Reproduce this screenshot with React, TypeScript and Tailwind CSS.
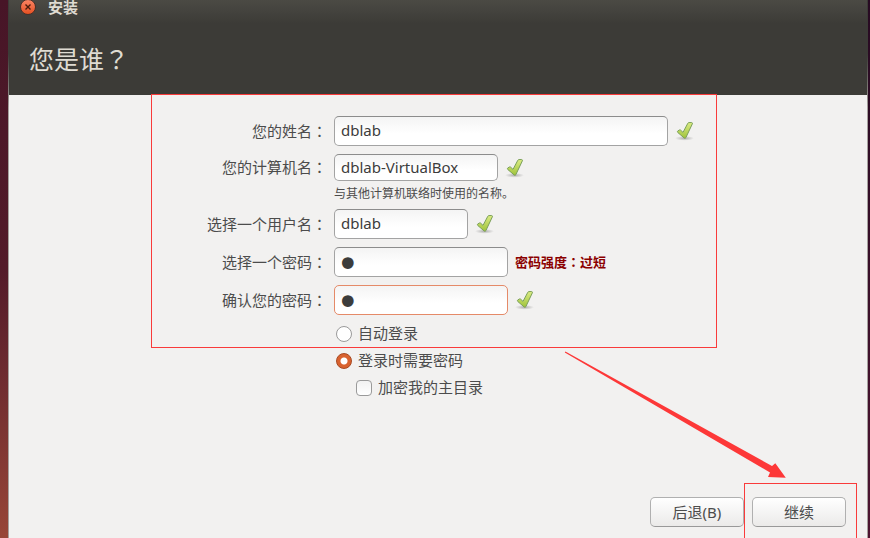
import React from 'react';

const CheckMark = () => (
  <svg className="w-5 h-5 shrink-0" viewBox="0 0 20 20" aria-hidden="true">
    <defs>
      <linearGradient id="tick" x1="0" y1="0" x2="0" y2="1">
        <stop offset="0" stopColor="#dcec84" />
        <stop offset="1" stopColor="#9fc33a" />
      </linearGradient>
      <radialGradient id="tickShadow">
        <stop offset="0" stopColor="#000" stopOpacity="0.28" />
        <stop offset="1" stopColor="#000" stopOpacity="0" />
      </radialGradient>
    </defs>
    <ellipse cx="9.5" cy="17.3" rx="9.5" ry="2.4" fill="url(#tickShadow)" />
    <path
      d="M2.4 10.9 Q2.3 10.2 3 9.8 L4.6 8.9 Q5.2 8.7 5.7 9.2 L8 11.4 L12.8 2.3 Q13.1 1.7 13.8 1.6 L16.6 1.5 Q17.8 1.7 17.3 2.9 L10.9 16.6 Q10.2 17.8 9.2 17 L2.9 11.6 Z"
      fill="url(#tick)"
      stroke="#7ba05a"
      strokeLinejoin="round"
    />
  </svg>
);

// Full-width punctuation centred in its cell
const Mark = ({ children }: { children: string }) => (
  <span className="font-['Noto_Sans_CJK_TC',sans-serif]">{children}</span>
);

type FieldProps = {
  id: string;
  label: string;
  value: string;
  width: string;
  type?: string;
  height?: string;
  focused?: boolean;
  hint?: string;
  children?: React.ReactNode;
};

const Field = ({ id, label, value, width, type = 'text', height = 'h-[30px]', focused, hint, children }: FieldProps) => (
  <div className="grid grid-cols-[318px_1fr] gap-x-[7px]">
    <label htmlFor={id} className="self-center text-right">
      {label}
      <Mark>：</Mark>
    </label>
    <div className="flex items-center gap-[7px]">
      <input
        id={id}
        type={type}
        defaultValue={value}
        className={`${width} ${height} min-w-0 rounded-[5px] border outline-none bg-linear-to-b from-[#f4f4f4] to-white to-60% text-[#3c3c3c] ${
          focused ? 'border-[#e58a68]' : 'border-[#a3a3a3] border-t-[#8c8c8c]'
        } ${
          type === 'password' ? "px-px pt-1 font-['DejaVu_Sans',sans-serif] text-[40px] leading-none" : 'px-[6px] pb-[2px]'
        }`}
      />
      {children}
    </div>
    {hint && <p className="col-start-2 text-xs leading-5 h-5 pt-[3px]">{hint}</p>}
  </div>
);

const radioClass =
  'appearance-none w-4 h-4 rounded-full border border-[#9a9a9a] bg-white checked:border-[#a8471f] checked:bg-[radial-gradient(circle,#fff_0_3px,#d9622f_4px)]';

const buttonClass =
  'w-[94px] h-[30px] rounded-[5px] border border-[#b0b0b0] border-b-[#999] bg-linear-to-b from-white to-[#ebeae9] text-[#4c4c4c]';

const edgeClass = 'w-px bg-linear-to-b from-[#3c3b37] from-10% to-[#a5a19d] to-20%';

const App = () => (
  <div className="min-h-screen flex overflow-hidden text-[15px] text-[#4c4c4c] font-['Noto_Sans','Noto_Sans_CJK_SC',sans-serif]">
    <div className="w-2 bg-linear-to-b from-[#471527] via-[#531b29] to-[#984637]" />
    <div className={edgeClass} />
    <div className="flex-1 flex flex-col bg-[#f2f1f0]">
      <header className="h-[95px] bg-linear-to-b from-[#4b4a44] to-[#3c3b37] to-25% text-[#dfdbd2]">
        <div className="flex items-center gap-3 h-[14px] pl-[11px]">
          <button
            aria-label="关闭"
            className="w-4 h-4 rounded-full border border-[#4a3028] bg-linear-to-b from-[#f98362] to-[#e5501f]"
          >
            <svg viewBox="0 0 14 14" className="block w-full" aria-hidden="true">
              <path d="M4.5 4.5 L9.5 9.5 M9.5 4.5 L4.5 9.5" stroke="#4a1c0c" strokeWidth="1.4" />
            </svg>
          </button>
          <span className="font-bold leading-none">安装</span>
        </div>
        <h1 className="pt-[26px] pl-5 text-[25px] leading-9">
          您是谁<Mark>？</Mark>
        </h1>
      </header>

      <main className="relative flex-1">
        <form className="pt-[21px] flex flex-col gap-2">
          <Field id="name" label="您的姓名" value="dblab" width="w-[334px]">
            <CheckMark />
          </Field>
          <Field
            id="host"
            label="您的计算机名"
            value="dblab-VirtualBox"
            width="w-[164px]"
            height="h-[27px]"
            hint="与其他计算机联络时使用的名称。"
          >
            <CheckMark />
          </Field>
          <Field id="user" label="选择一个用户名" value="dblab" width="w-[134px]">
            <CheckMark />
          </Field>
          <Field id="password" label="选择一个密码" value="a" width="w-[174px]" type="password">
            <strong className="text-[13px] text-[#8b0000]">
              密码强度
              <Mark>：</Mark>
              过短
            </strong>
          </Field>
          <Field id="confirm" label="确认您的密码" value="a" width="w-[174px]" type="password" focused>
            <CheckMark />
          </Field>
          <div className="pl-[327px] -mt-[3px]">
            <label className="flex items-center gap-[6px] h-[27px]">
              <input type="radio" name="login" className={radioClass} />
              自动登录
            </label>
            <label className="flex items-center gap-[6px] h-[27px]">
              <input type="radio" name="login" defaultChecked className={radioClass} />
              登录时需要密码
            </label>
            <label className="flex items-center gap-[6px] h-[27px] pl-5">
              <input
                type="checkbox"
                className="appearance-none w-4 h-4 rounded-[4px] border border-[#9a9a9a] bg-linear-to-b from-[#f2f2f2] to-white"
              />
              加密我的主目录
            </label>
          </div>
        </form>
        <div className="absolute left-[142px] -top-px w-[566px] h-[254px] border border-[#f93b3b] pointer-events-none" />
      </main>

      <footer className="flex justify-end gap-2 pr-[21px] pb-[11px]">
        <button className={buttonClass}>后退(B)</button>
        <div className="relative">
          <button className={buttonClass}>继续</button>
          <div className="absolute -left-2 -right-[11px] -top-[14px] -bottom-[11px] border border-b-0 border-[#f93b3b] pointer-events-none" />
          <svg
            className="absolute right-[60px] bottom-[49px] w-[222px] h-[127px] pointer-events-none"
            viewBox="0 0 222 127"
            aria-hidden="true"
          >
            <path d="M0.8 1.4 L1.4 0.6 L208 115 L211.3 112.3 L221.8 126.8 L204 126 L206 121.5 Z" fill="#fd3838" />
          </svg>
        </div>
      </footer>
    </div>
    <div className={edgeClass} />
    <div className="w-[2px] bg-linear-to-b from-[#270a22] to-[#4d1430]" />
  </div>
);

export default App;
